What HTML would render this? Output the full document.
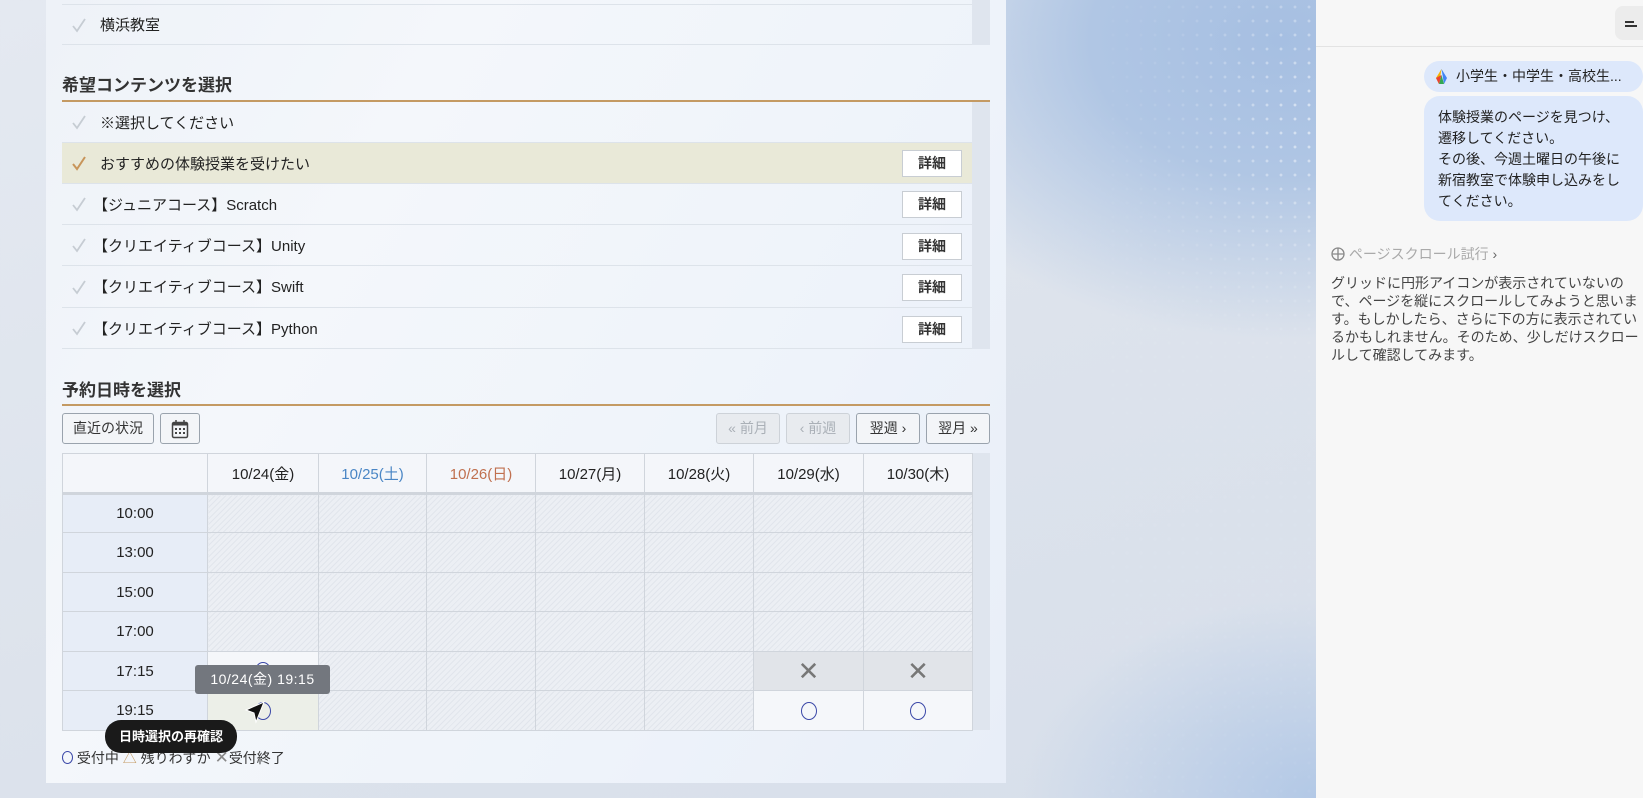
<!DOCTYPE html>
<html><head><meta charset="utf-8"><style>
*{margin:0;padding:0;box-sizing:border-box}
body{width:1643px;height:798px;overflow:hidden;position:relative;font-family:"Liberation Sans","Noto Sans CJK JP",sans-serif;color:#222;
background:linear-gradient(160deg,#e4e9f1 0%,#dde3ec 50%,#d6deea 100%)}
.bgblue{position:absolute;left:940px;top:0;width:380px;height:798px;
background:radial-gradient(ellipse 420px 300px at 340px 40px,#a6bfe2 0%,#b0c6e4 45%,rgba(220,227,238,0) 100%),radial-gradient(ellipse 300px 200px at 380px 798px,#b2c8e6 0%,rgba(220,227,238,0) 100%)}
.dots{position:absolute;left:1100px;top:0;width:216px;height:798px;
background-image:radial-gradient(circle,#fff 1.2px,transparent 1.7px);background-size:14px 14px;background-position:6px 0;
-webkit-mask-image:radial-gradient(ellipse 200px 260px at 216px 120px,rgba(0,0,0,.7),rgba(0,0,0,.15) 70%,rgba(0,0,0,.05));opacity:.8}
.panel{position:absolute;left:46px;top:0;width:960px;height:783px;background:linear-gradient(120deg,#eef2f8 0%,#f4f7fb 30%,#eef3fa 70%,#e8eef8 100%)}
.a{position:absolute}
.row{position:absolute;left:62px;width:910px;border-bottom:1px solid #dde3ea;font-size:15px;display:flex;align-items:center;padding-left:38px}
.row .ck{position:absolute;left:10px;top:50%;margin-top:-8px;width:14px;height:16px}
.sb{position:absolute;left:972px;width:18px;background:#dfe5ee}
.det{position:absolute;left:902px;width:60px;height:27px;background:#fff;border:1px solid #c8cdd3;font-size:14px;font-weight:bold;text-align:center;line-height:25px;color:#333}
h3{position:absolute;left:62px;font-size:17px;font-weight:bold;color:#333}
.oline{position:absolute;left:62px;width:928px;height:2px;background:#c49a63}
.btn{position:absolute;top:413px;height:31px;border:1px solid #9aa3ad;border-radius:3px;background:#f3f5f8;font-size:14px;text-align:center;line-height:29px;color:#333}
.btn.dis{color:#aab0b7;border-color:#cdd2d8;background:#e8ebef}
table{position:absolute;left:62px;top:453px;border-collapse:collapse;font-size:15px}
td{border:1px solid #d0d5dc;text-align:center;padding:0}
.hatch{background:repeating-linear-gradient(135deg,#e1e5ec 0,#e1e5ec 1px,#eceff4 1px,#eceff4 4px)}
.tm{background:#e7edf7}
.circ{display:inline-block;width:16px;height:18px;border:1.5px solid #3b48a8;border-radius:50%;vertical-align:middle}
.rp{position:absolute;left:1316px;top:0;width:327px;height:798px;background:#f7f7f7}
</style></head><body>
<div class="bgblue"></div><div class="dots"></div>
<div class="panel"></div>

<div class="sb" style="top:0;height:45px"></div>
<div class="row" style="border-top:1px solid #dde3ea;top:4px;height:41px"><svg class="ck" viewBox="0 0 14 16"><path d="M1 9l4 5 8-12" fill="none" stroke="#c6ccd3" stroke-width="1.8"/></svg>横浜教室</div>

<h3 style="top:71px">希望コンテンツを選択</h3>
<div class="oline" style="top:100px"></div>
<div class="sb" style="top:102px;height:247px"></div>
<div class="row" style="top:102px;height:41px"><svg class="ck" viewBox="0 0 14 16"><path d="M1 9l4 5 8-12" fill="none" stroke="#c6ccd3" stroke-width="1.8"/></svg>※選択してください</div>
<div class="row" style="top:143px;height:41px;background:#e9e9d8"><svg class="ck" viewBox="0 0 14 16"><path d="M1 9l4 5 8-12" fill="none" stroke="#c8955a" stroke-width="2"/></svg>おすすめの体験授業を受けたい</div>
<div class="row" style="top:184px;height:41px;padding-left:31px"><svg class="ck" viewBox="0 0 14 16"><path d="M1 9l4 5 8-12" fill="none" stroke="#c6ccd3" stroke-width="1.8"/></svg>【ジュニアコース】Scratch</div>
<div class="row" style="top:225px;height:41px;padding-left:31px"><svg class="ck" viewBox="0 0 14 16"><path d="M1 9l4 5 8-12" fill="none" stroke="#c6ccd3" stroke-width="1.8"/></svg>【クリエイティブコース】Unity</div>
<div class="row" style="top:266px;height:42px;padding-left:31px"><svg class="ck" viewBox="0 0 14 16"><path d="M1 9l4 5 8-12" fill="none" stroke="#c6ccd3" stroke-width="1.8"/></svg>【クリエイティブコース】Swift</div>
<div class="row" style="top:308px;height:41px;padding-left:31px"><svg class="ck" viewBox="0 0 14 16"><path d="M1 9l4 5 8-12" fill="none" stroke="#c6ccd3" stroke-width="1.8"/></svg>【クリエイティブコース】Python</div>
<div class="det" style="top:150px">詳細</div>
<div class="det" style="top:191px">詳細</div>
<div class="det" style="top:233px">詳細</div>
<div class="det" style="top:274px">詳細</div>
<div class="det" style="top:316px">詳細</div>

<h3 style="top:376px">予約日時を選択</h3>
<div class="oline" style="top:404px"></div>
<div class="btn" style="left:62px;width:92px">直近の状況</div>
<div class="btn" style="left:160px;width:40px"><svg width="18" height="20" viewBox="0 0 18 20" style="margin-top:5px"><rect x="1.5" y="3.5" width="15" height="15" rx="1.5" fill="none" stroke="#444" stroke-width="1.5"/><rect x="1.5" y="3.5" width="15" height="3" fill="#444"/><path d="M5 1v4M13 1v4" stroke="#444" stroke-width="1.5"/><g fill="#444"><rect x="4" y="9" width="2" height="2"/><rect x="8" y="9" width="2" height="2"/><rect x="12" y="9" width="2" height="2"/><rect x="4" y="13" width="2" height="2"/><rect x="8" y="13" width="2" height="2"/><rect x="12" y="13" width="2" height="2"/></g></svg></div>
<div class="btn dis" style="left:716px;width:64px">« 前月</div>
<div class="btn dis" style="left:786px;width:64px">‹ 前週</div>
<div class="btn" style="left:856px;width:64px">翌週 ›</div>
<div class="btn" style="left:926px;width:64px">翌月 »</div>

<div class="sb" style="top:453px;height:277px;width:18px"></div>
<table>
<tr style="height:40px;background:#f4f6fa"><td style="width:145px;border-bottom:3px solid #d0d5dc"></td><td style="width:111px;border-bottom:3px solid #d0d5dc">10/24(金)</td><td style="width:108px;color:#4a86c5;border-bottom:3px solid #d0d5dc">10/25(土)</td><td style="width:109px;color:#c0704f;border-bottom:3px solid #d0d5dc">10/26(日)</td><td style="width:109px;border-bottom:3px solid #d0d5dc">10/27(月)</td><td style="width:109px;border-bottom:3px solid #d0d5dc">10/28(火)</td><td style="width:110px;border-bottom:3px solid #d0d5dc">10/29(水)</td><td style="width:109px;border-bottom:3px solid #d0d5dc">10/30(木)</td></tr>
<tr style="height:39px"><td class="tm">10:00</td><td class="hatch"></td><td class="hatch"></td><td class="hatch"></td><td class="hatch"></td><td class="hatch"></td><td class="hatch"></td><td class="hatch"></td></tr>
<tr style="height:40px"><td class="tm">13:00</td><td class="hatch"></td><td class="hatch"></td><td class="hatch"></td><td class="hatch"></td><td class="hatch"></td><td class="hatch"></td><td class="hatch"></td></tr>
<tr style="height:39px"><td class="tm">15:00</td><td class="hatch"></td><td class="hatch"></td><td class="hatch"></td><td class="hatch"></td><td class="hatch"></td><td class="hatch"></td><td class="hatch"></td></tr>
<tr style="height:40px"><td class="tm">17:00</td><td class="hatch"></td><td class="hatch"></td><td class="hatch"></td><td class="hatch"></td><td class="hatch"></td><td class="hatch"></td><td class="hatch"></td></tr>
<tr style="height:39px"><td class="tm">17:15</td><td style="background:#f5f7fa"><span class="circ"></span></td><td class="hatch"></td><td class="hatch"></td><td class="hatch"></td><td class="hatch"></td><td style="background:#e1e4e9;color:#777;font-size:26px">✕</td><td style="background:#e1e4e9;color:#777;font-size:26px">✕</td></tr>
<tr style="height:40px"><td class="tm">19:15</td><td style="background:#ecefe8"><span class="circ"></span></td><td class="hatch"></td><td class="hatch"></td><td class="hatch"></td><td class="hatch"></td><td style="background:#f5f7fa"><span class="circ"></span></td><td style="background:#f5f7fa"><span class="circ"></span></td></tr>
</table>

<div class="a" style="left:195px;top:665px;width:135px;height:29px;background:#73777e;border-radius:3px;color:#fff;font-size:14px;line-height:29px;text-align:center;letter-spacing:.5px">10/24(金) 19:15</div>
<svg class="a" style="left:244px;top:700px" width="22" height="24" viewBox="0 0 22 24"><path d="M20 2L2 10l8 3 2 9z" fill="#111" stroke="#fff" stroke-width="1"/></svg>

<div class="a" style="left:62px;top:748px;font-size:14px;color:#333;white-space:nowrap"><span style="display:inline-block;width:11px;height:13px;border:1.5px solid #3b48a8;border-radius:50%;vertical-align:-1px"></span> 受付中 <span style="color:#c49a63">△</span> 残りわずか <span style="color:#888;font-size:17px">✕</span>受付終了</div>
<div class="a" style="left:105px;top:720px;width:132px;height:33px;background:#1a1a1a;border-radius:16px;color:#fff;font-size:13px;font-weight:bold;line-height:33px;text-align:center">日時選択の再確認</div>

<div class="rp">
<div class="a" style="left:0;top:46px;width:327px;height:1px;background:#e3e3e3"></div>
<div class="a" style="left:299px;top:6px;width:40px;height:34px;background:#ececec;border-radius:8px"><div class="a" style="left:10px;top:15px;width:9px;height:1.5px;background:#333"></div><div class="a" style="left:10px;top:19px;width:12px;height:1.5px;background:#333"></div></div>
<div class="a" style="left:108px;top:61px;width:219px;height:31px;background:#dde8fb;border-radius:16px;font-size:14px;line-height:31px;padding-left:32px;color:#222">小学生・中学生・高校生...</div>
<svg class="a" style="left:120px;top:69px" width="11" height="15" viewBox="0 0 11 15"><path d="M5.5 0L0 9l3 6z" fill="#f4b400"/><path d="M5.5 0L11 9 8 15z" fill="#4285f4"/><path d="M3 15h5L5.5 6z" fill="#34a853"/><path d="M0 9l3 6 2.5-9z" fill="#ea4335"/></svg>
<div class="a" style="left:108px;top:96px;width:219px;height:125px;background:#dde8fb;border-radius:16px;font-size:14px;line-height:21px;padding:11px 0 0 14px;color:#222">体験授業のページを見つけ、<br>遷移してください。<br>その後、今週土曜日の午後に<br>新宿教室で体験申し込みをし<br>てください。</div>
<div class="a" style="left:15px;top:244px;font-size:14px;color:#aaa;white-space:nowrap"><svg width="14" height="14" viewBox="0 0 14 14" style="vertical-align:-2px"><circle cx="7" cy="7" r="6" fill="none" stroke="#888" stroke-width="1.3"/><path d="M1 7h12M7 1v12" stroke="#888" stroke-width="1.3"/></svg> ページスクロール試行 <span style="color:#666">›</span></div>
<div class="a" style="left:15px;top:274px;width:310px;font-size:14px;line-height:18px;color:#444">グリッドに円形アイコンが表示されていないので、ページを縦にスクロールしてみようと思います。もしかしたら、さらに下の方に表示されているかもしれません。そのため、少しだけスクロールして確認してみます。</div>
</div>
</body></html>
